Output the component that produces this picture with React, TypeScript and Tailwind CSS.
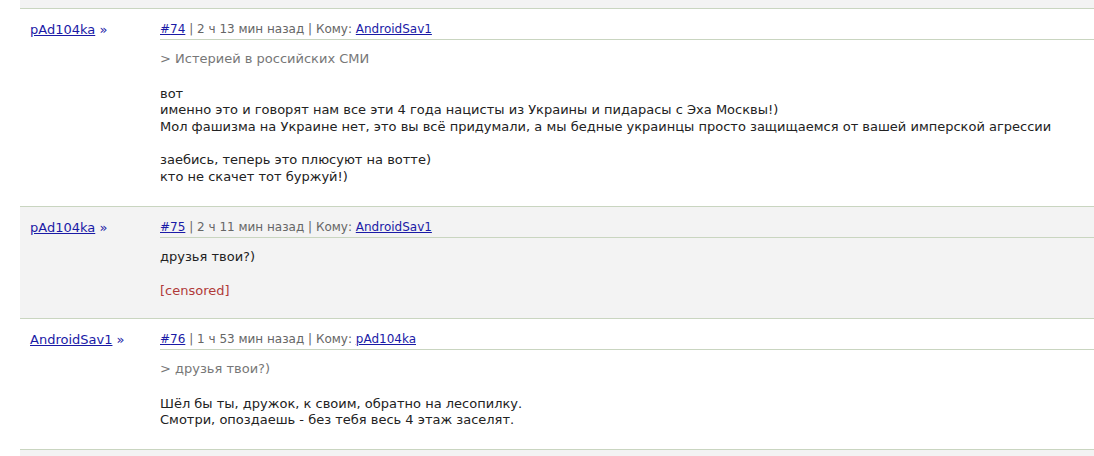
type Comment = {
  num: number;
  author: string;
  time: string;
  to: string;
  quote?: string;
  body: string[][];
  censored?: boolean;
  shaded?: boolean;
  pb: string;
};

const comments: Comment[] = [
  {
    num: 74,
    author: "pAd104ka",
    time: "2 ч 13 мин назад",
    to: "AndroidSav1",
    quote: "> Истерией в российских СМИ",
    body: [
      [
        "вот",
        "именно это и говорят нам все эти 4 года нацисты из Украины и пидарасы с Эха Москвы!)",
        "Мол фашизма на Украине нет, это вы всё придумали, а мы бедные украинцы просто защищаемся от вашей имперской агрессии",
      ],
      ["заебись, теперь это плюсуют на вотте)", "кто не скачет тот буржуй!)"],
    ],
    pb: "pb-[21px]",
  },
  {
    num: 75,
    author: "pAd104ka",
    time: "2 ч 11 мин назад",
    to: "AndroidSav1",
    body: [["друзья твои?)"]],
    censored: true,
    shaded: true,
    pb: "pb-[19px]",
  },
  {
    num: 76,
    author: "AndroidSav1",
    time: "1 ч 53 мин назад",
    to: "pAd104ka",
    quote: "> друзья твои?)",
    body: [
      [
        "Шёл бы ты, дружок, к своим, обратно на лесопилку.",
        "Смотри, опоздаешь - без тебя весь 4 этаж заселят.",
      ],
    ],
    pb: "pb-[20px]",
  },
];

function CommentRow({ c }: { c: Comment }) {
  return (
    <div
      className={`flex border-t border-[#c9d5c0] ${c.shaded ? "bg-[#f3f3f3]" : "bg-white"}`}>
      <div className="w-[140px] shrink-0 pl-[10px] pt-[12px] text-[13px]">
        <a href="#" className="text-[#1a1aa6] underline">
          {c.author}
        </a>{" "}
        <span className="text-[#1a1aa6]">»</span>
      </div>
      <div className={`min-w-0 flex-1 pt-[12px] ${c.pb}`}>
        <div className="border-b border-[#c9d5c0] pb-[1px] text-[#666]">
          <a href="#" className="text-[#1a1aa6] underline">
            #{c.num}
          </a>{" "}
          | {c.time} | Кому:{" "}
          <a href="#" className="text-[#1a1aa6] underline">
            {c.to}
          </a>
        </div>
        <div className="pt-[11px] text-[13px] leading-[16.5px]">
          {c.quote && <p className="mb-[18px] text-[#777]">{c.quote}</p>}
          {c.body.map((para, i) => (
            <p key={i} className="mb-[17px] text-[#222] last:mb-0">
              {para.map((line, j) => (
                <span key={j} className="block">
                  {line}
                </span>
              ))}
            </p>
          ))}
          {c.censored && <p className="mt-[17px] text-[#b03a3a]">[censored]</p>}
        </div>
      </div>
    </div>
  );
}

export default function App() {
  return (
    <div className="h-[456px] overflow-hidden bg-white font-['DejaVu_Sans',sans-serif] text-[12px] leading-[17px]">
      <div className="ml-[20px]">
        <div className="h-[8px] bg-[#f3f3f3]" />
        {comments.map((c) => (
          <CommentRow key={c.num} c={c} />
        ))}
        <div className="h-[20px] border-t border-[#c9d5c0] bg-[#f3f3f3]" />
      </div>
    </div>
  );
}
